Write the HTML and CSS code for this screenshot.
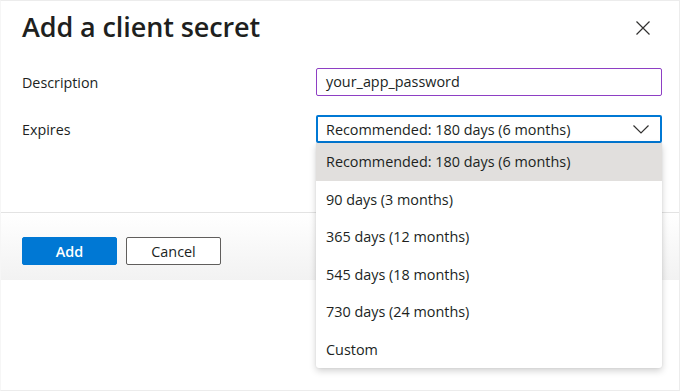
FILE: index.html
```html
<!DOCTYPE html>
<html lang="en">
<head>
<meta charset="utf-8">
<title>Add a client secret</title>
<link rel="stylesheet" href="styles.css">
</head>
<body>
<div class="panel">
  <header class="header">
    <h1 class="title">Add a client secret</h1>
    <button class="close" aria-label="Close">
      <svg width="14" height="14" viewBox="0 0 14 14"><path d="M0.5 0.5 L13.5 13.5 M13.5 0.5 L0.5 13.5" stroke="#323130" stroke-width="1.2" fill="none"/></svg>
    </button>
  </header>
  <div class="form">
    <label class="label">Description</label>
    <div class="input">your_app_password</div>
    <label class="label">Expires</label>
    <div class="select-wrap">
      <div class="select">
        <span>Recommended: 180 days (6 months)</span>
        <svg class="chev" width="16" height="9" viewBox="0 0 16 9"><path d="M0.5 0.5 L8 8 L15.5 0.5" stroke="#323130" stroke-width="1.2" fill="none"/></svg>
      </div>
      <ul class="menu">
        <li class="item selected">Recommended: 180 days (6 months)</li>
        <li class="item">90 days (3 months)</li>
        <li class="item">365 days (12 months)</li>
        <li class="item">545 days (18 months)</li>
        <li class="item">730 days (24 months)</li>
        <li class="item">Custom</li>
      </ul>
    </div>
  </div>
  <div class="footer">
    <button class="btn primary">Add</button>
    <button class="btn secondary">Cancel</button>
  </div>
</div>
</body>
</html>
```
FILE: styles.css
```css
* { box-sizing: border-box; }
html, body { margin: 0; padding: 0; background: #fff; }
body {
  font-family: "Open Sans", "Noto Sans", sans-serif;
  color: #201f1e;
  width: 680px;
  height: 391px;
  overflow: hidden;
}
.panel {
  width: 680px;
  height: 391px;
  border: 1px solid #ececec;
  border-left-color: #f6f6f6;
  display: flex;
  flex-direction: column;
}
.header {
  display: flex;
  justify-content: space-between;
  align-items: flex-start;
  padding: 6px 29px 0 21px;
  height: 58px;
}
.title {
  margin: 0;
  font-size: 27px;
  font-weight: 600;
  line-height: 40px;
  letter-spacing: -0.1px;
}
.close {
  border: 0;
  background: none;
  padding: 0;
  margin-top: 14px;
  width: 14px;
  height: 14px;
  display: flex;
}
.form {
  display: grid;
  grid-template-columns: 294px 346px;
  grid-template-rows: 28px 28px;
  row-gap: 19px;
  padding: 9px 0 0 21px;
  align-items: center;
}
.label {
  font-size: 14.3px;
}
.input {
  height: 28px;
  border: 1px solid #8e3fc4;
  border-radius: 2px;
  padding: 0 9px;
  font-size: 14.4px;
  line-height: 26px;
}
.select-wrap {
  position: relative;
  height: 28px;
}
.select {
  height: 28px;
  border: 2px solid #0078d4;
  border-radius: 2px;
  padding: 0 11px 0 8px;
  font-size: 14.4px;
  display: flex;
  align-items: center;
  justify-content: space-between;
}
.chev { margin-top: 1px; }
.menu {
  position: absolute;
  top: 28px;
  left: 0;
  width: 346px;
  margin: 0;
  padding: 0;
  list-style: none;
  background: #fff;
  border-radius: 0 0 3px 3px;
  box-shadow: 0 3px 7px rgba(0,0,0,0.18), 0 0 2px rgba(0,0,0,0.08);
  z-index: 2;
}
.item {
  height: 37.5px;
  line-height: 37.5px;
  padding: 0 10px;
  font-size: 14.4px;
}
.item.selected { background: #e1dfdd; }
.footer {
  margin-top: 69px;
  border-top: 1px solid #e3e3e3;
  height: 68px;
  background: linear-gradient(#ffffff, #f2f2f2);
  display: flex;
  align-items: flex-start;
  gap: 9px;
  padding: 24px 0 0 21px;
}
.btn {
  font-family: inherit;
  height: 28px;
  width: 95px;
  border-radius: 2px;
  font-size: 14.4px;
  padding: 0;
}
.primary {
  background: #0078d4;
  border: 1px solid #0078d4;
  color: #fff;
  font-weight: 600;
}
.secondary {
  background: #fff;
  border: 1px solid #605e5c;
  color: #201f1e;
}
```
